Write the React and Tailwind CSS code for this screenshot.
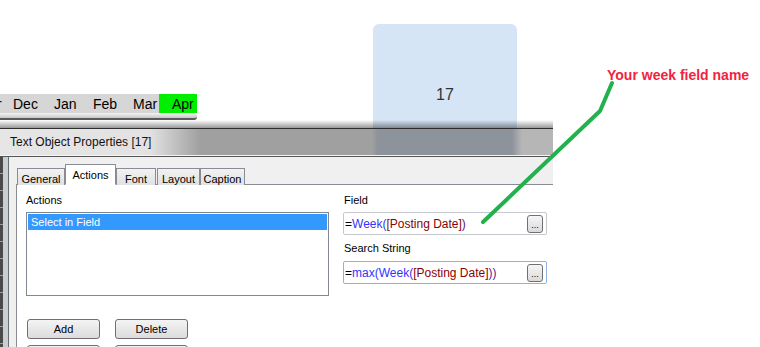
import React from 'react';

const months = [
  { label: 'Dec', w: 'w-[41px]', pl: 'pl-[7px]' },
  { label: 'Jan', w: 'w-[39px]', pl: 'pl-[7px]' },
  { label: 'Feb', w: 'w-[40px]', pl: 'pl-[7px]' },
  { label: 'Mar', w: 'w-[33px]', pl: 'pl-[7px]' },
];

const tabs = [
  { label: 'General', w: 'w-[48px]' },
  { label: 'Actions', w: 'w-[51px]', active: true },
  { label: 'Font', w: 'w-[40px]' },
  { label: 'Layout', w: 'w-[43px]', gap: true },
  { label: 'Caption', w: 'w-[45px]' },
];

function WinButton({ children, className = '' }) {
  return (
    <div
      className={`flex items-center justify-center h-[20px] w-[73px] rounded-[3px] border border-[#707070] bg-gradient-to-b from-[#f4f4f4] to-[#dcdcdc] text-[11px] text-black ${className}`}
    >
      {children}
    </div>
  );
}

function Ellipsis() {
  return (
    <div className="ml-auto mr-[3px] flex h-[18px] w-[16px] items-end justify-center rounded-[3px] border border-[#707070] bg-gradient-to-b from-[#f6f6f6] to-[#dadada] pb-[2px] text-[9px] leading-none text-black">
      ...
    </div>
  );
}

function ExprBox({ children, focused }) {
  return (
    <div
      className={`flex h-[23px] items-center rounded-[2px] border bg-white pl-[1px] text-[12px] ${
        focused ? 'border-[#8db4e0]' : 'border-[#c5c8cf]'
      }`}
    >
      <span className="whitespace-nowrap">{children}</span>
      <Ellipsis />
    </div>
  );
}

export default function App() {
  return (
    <div className="relative h-[347px] w-[760px] overflow-hidden bg-white font-['Liberation_Sans',Arial,sans-serif] text-black">
      {/* backdrop: month strip + chart box */}
      <div className="flex h-[120px] items-start">
        <div className="flex w-[197px] flex-col pt-[94px]">
          <div className="flex h-[19px] items-center bg-[#d6d6d6] text-[14px] leading-none">
            <div className="w-[6px] overflow-hidden">
              <span className="-ml-[3px] block">r</span>
            </div>
            {months.map((m) => (
              <div key={m.label} className={`${m.w} ${m.pl}`}>{m.label}</div>
            ))}
            <div className="flex h-full w-[38px] items-center bg-[#00ee00] pl-[13px]">Apr</div>
          </div>
          <div className="h-[7px] rounded-br-[3px] border-b-2 border-[#5a5a5a] bg-gradient-to-b from-[#f4f4f4] to-[#c8c8c8]" />
        </div>
        <div className="ml-[176px] mt-[24px] flex h-[110px] w-[144px] justify-center rounded-t-[6px] bg-[#d5e5f5] pt-[62px] text-[16px] leading-[18px] text-[#333]">
          17
        </div>
      </div>

      {/* dialog */}
      <div className="relative flex w-[553px] flex-col">
        <div className="h-[8px] bg-gradient-to-b from-black/0 to-black/40" />
        <div className="h-px bg-[#2e2e2e]" />
        <div className="flex h-[26px] items-center bg-[linear-gradient(to_right,#e6e6e6_0px,#e2e2e2_150px,#a0a0a0_200px,#a0a0a0_372px,#8c939b_378px,#8c939b_512px,#b6b6b6_522px,#b6b6b6_553px)] pl-[10px] text-[12px] text-[#111]">
          Text Object Properties [17]
        </div>
        <div className="h-px bg-[#f4f4f4]" />
        <div className="h-px bg-[#555]" />
        <div className="flex h-[190px]">
          <div className="w-[3px] bg-[repeating-linear-gradient(to_bottom,#4a4a4a_0px,#4a4a4a_16px,#9a9a9a_16px,#9a9a9a_17px)]" />
          <div className="w-[5px] bg-[#c9ced5]" />
          <div className="w-px bg-[#6d6d6d]" />
          <div className="flex flex-1 flex-col bg-[#f0f0f0] pl-[7px] pt-[7px]">
            {/* tabs */}
            <div className="relative z-10 flex h-[21px] items-end pl-[1px]">
              {tabs.map((t) => (
                <div
                  key={t.label}
                  className={`${t.w} ${t.gap ? 'ml-[1px]' : ''} flex justify-center border border-[#898c95] text-[11px] ${
                    t.active
                      ? 'h-[21px] border-b-white bg-white pt-[2px]'
                      : 'h-[17px] border-b-0 bg-gradient-to-b from-[#f2f2f2] to-[#e1e1e1] pt-[2px]'
                  }`}
                >
                  {t.label}
                </div>
              ))}
            </div>
            {/* panel */}
            <div className="-mt-px flex flex-1 border-l border-t border-[#898c95] bg-white pl-[9px]">
              <div className="flex w-[303px] flex-col">
                <div className="mt-[9px] text-[11px] leading-[13px]">Actions</div>
                <div className="mt-[5px] h-[84px] border border-[#828790] bg-white p-px">
                  <div className="flex h-[16px] items-center bg-[#3399ff] pl-[3px] text-[11px] text-white">
                    Select in Field
                  </div>
                </div>
                <div className="mt-[23px] flex gap-[15px] pl-[1px]">
                  <WinButton>Add</WinButton>
                  <WinButton>Delete</WinButton>
                </div>
                <div className="mt-[6px] flex gap-[15px] pl-[1px]">
                  <WinButton />
                  <WinButton />
                </div>
              </div>
              <div className="ml-[14px] flex w-[204px] flex-col">
                <div className="mt-[9px] pl-px text-[11px] leading-[13px]">Field</div>
                <div className="mt-[5px]">
                  <ExprBox>
                    =<span className="text-[#3333ff]">Week(</span>
                    <span className="text-[#8b0000]">[Posting Date]</span>
                    <span className="text-[#5a1a8a]">)</span>
                  </ExprBox>
                </div>
                <div className="mt-[7px] pl-px text-[11px] leading-[13px]">Search String</div>
                <div className="mt-[6px]">
                  <ExprBox focused>
                    =<span className="text-[#3333ff]">max(Week(</span>
                    <span className="text-[#8b0000]">[Posting Date]</span>
                    <span className="text-[#5a1a8a]">))</span>
                  </ExprBox>
                </div>
              </div>
            </div>
          </div>
        </div>
      </div>

      {/* annotation */}
      <div className="absolute left-[607px] top-[65px] whitespace-nowrap text-[14px] font-bold text-[#f2233d]">
        Your week field name
      </div>
      <svg className="pointer-events-none absolute left-0 top-0" width="760" height="347">
        <polyline
          points="612,83 600,111 483,222"
          fill="none"
          stroke="#22b14c"
          strokeWidth="4"
          strokeLinecap="round"
          strokeLinejoin="round"
        />
      </svg>
    </div>
  );
}
